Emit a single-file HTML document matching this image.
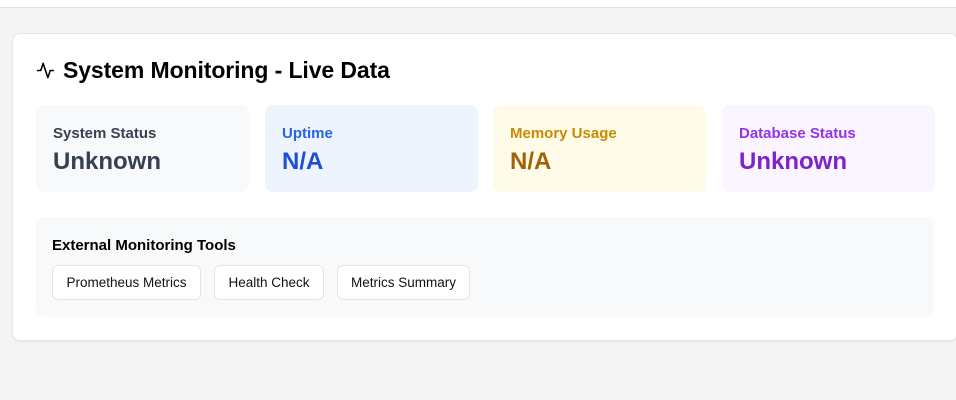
<!DOCTYPE html>
<html><head><meta charset="utf-8"><style>
*{box-sizing:border-box;margin:0;padding:0}
body{width:956px;height:400px;background:#f4f4f4;font-family:"Liberation Sans",Arial,sans-serif;position:relative;overflow:hidden}
.top{position:absolute;left:0;top:0;width:956px;height:8px;background:#fff;border-bottom:1px solid #e2e2e2}
.card{position:absolute;left:12px;top:33px;width:946px;height:308px;background:#fff;border:1px solid #e5e5e5;border-radius:8px;box-shadow:0 1px 2px rgba(0,0,0,.05)}
h2{position:absolute;left:23px;top:23px;font-size:23px;font-weight:bold;color:#000;display:flex;align-items:center;gap:8px;letter-spacing:-0.1px}
.stat{position:absolute;top:71px;width:213px;height:87px;border-radius:8px;padding:20px 17px 0}
.stat .l{font-size:15px;font-weight:bold;line-height:17px}
.stat .v{font-size:24px;font-weight:bold;margin-top:6px;line-height:28px}
.tools{position:absolute;left:23px;top:183px;width:898px;height:100px;background:#f8f9fb;border-radius:8px;padding:20px 16px 0}
.tools h3{font-size:15px;font-weight:bold;color:#000;line-height:17px}
.btns{margin-top:11px;display:flex;gap:13px}
.btn{height:35px;background:#fff;border:1px solid #e3e5e8;border-radius:6px;font-size:13.5px;color:#111;text-align:center;line-height:33px}
</style></head><body>
<div class="top"></div>
<div class="card">
<h2><svg width="19" height="19" viewBox="0 0 24 24" fill="none" stroke="#000" stroke-width="2" stroke-linecap="round" stroke-linejoin="round"><path d="M22 12h-4l-3 9L9 3l-3 9H2"/></svg>System Monitoring - Live Data</h2>
<div class="stat" style="left:23px;background:#f8f9fb"><div class="l" style="color:#374151">System Status</div><div class="v" style="color:#374151">Unknown</div></div>
<div class="stat" style="left:252px;background:#eef4fe"><div class="l" style="color:#2563eb">Uptime</div><div class="v" style="color:#1d4ed8">N/A</div></div>
<div class="stat" style="left:480px;background:#fefbe8"><div class="l" style="color:#ca8a04">Memory Usage</div><div class="v" style="color:#a16207">N/A</div></div>
<div class="stat" style="left:709px;background:#faf5ff"><div class="l" style="color:#9333ea">Database Status</div><div class="v" style="color:#7e22ce">Unknown</div></div>
<div class="tools"><h3>External Monitoring Tools</h3>
<div class="btns"><div class="btn" style="width:149px">Prometheus Metrics</div><div class="btn" style="width:110px">Health Check</div><div class="btn" style="width:133px">Metrics Summary</div></div></div>
</div>
</body></html>
